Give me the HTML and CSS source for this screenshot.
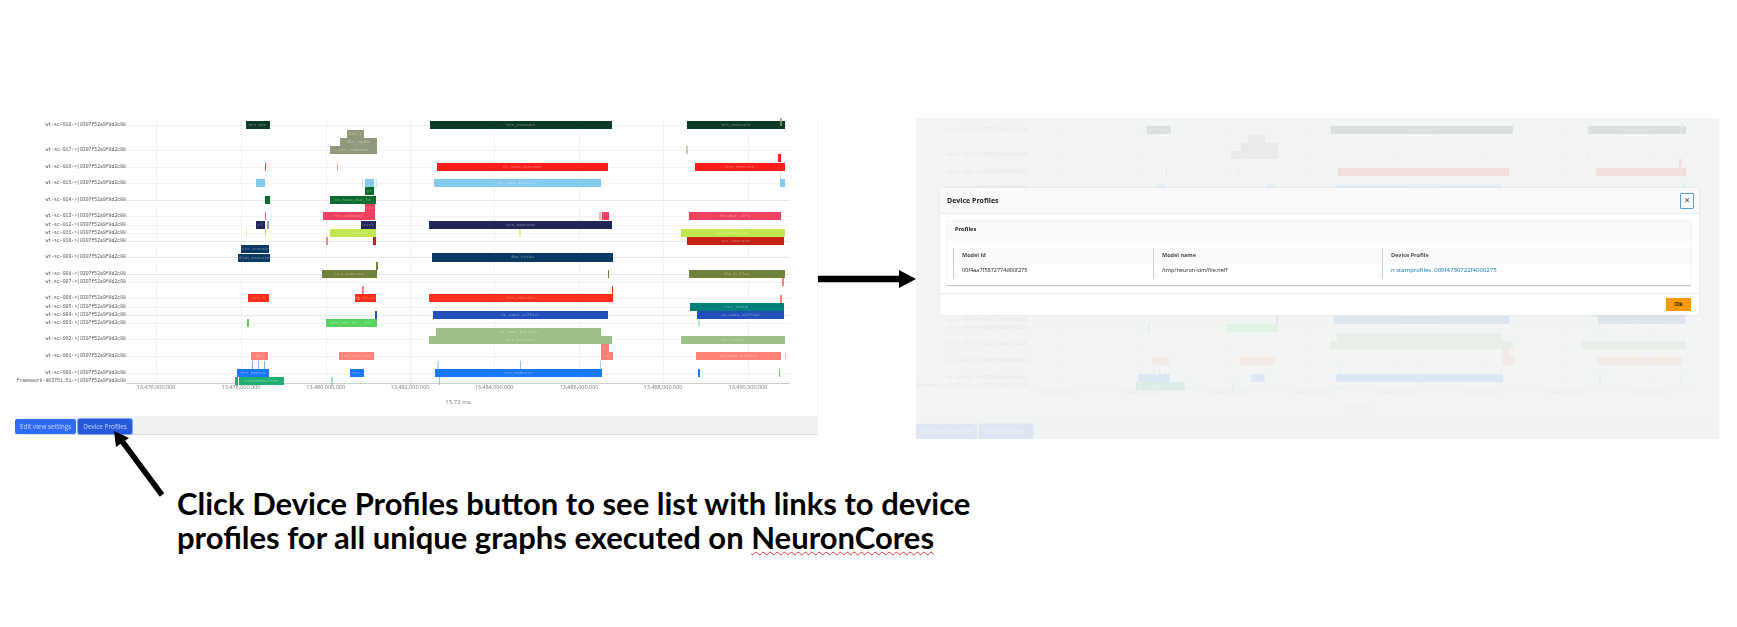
FILE: index.html
```html
<!DOCTYPE html>
<html lang="en">

<head>
    <meta charset="UTF-8">
    <title>Device Profiles</title>
    <link rel="stylesheet" href="styles.css">
</head>

<body>
    <div class="slide">
        <!-- Left: timeline -->
        <div class="timeline-panel" data-chart></div>

        <!-- Right: timeline behind the modal -->
        <div class="timeline-panel dimmed" data-chart>
            <div class="backdrop"></div>
            <div class="modal">
                <div class="modal-header">
                    <span class="modal-title">Device Profiles</span>
                    <span class="modal-close">×</span>
                </div>
                <div class="modal-body">
                    <div class="profiles-card">
                        <div class="profiles-title">Profiles</div>
                        <div class="profiles-table">
                            <div class="cell head">Model Id</div>
                            <div class="cell head">Model name</div>
                            <div class="cell head">Device Profile</div>
                            <div class="cell">00f4aa7f5872774d00f275</div>
                            <div class="cell">/tmp/neuron-sim/file.neff</div>
                            <div class="cell"><span class="link">n stamprofiles&nbsp; 009f4730722f4000275</span></div>
                        </div>
                    </div>
                </div>
                <div class="modal-footer">
                    <span class="btn-ok">Ok</span>
                </div>
            </div>
        </div>

        <!-- Arrows over the slide -->
        <svg class="arrows" width="1737" height="627" viewBox="0 0 1737 627">
            <path d="M818 279H900" stroke="#000" stroke-width="6.5" fill="none" />
            <path d="M916 279L899 270V288Z" fill="#000" />
            <path d="M162 495L122 441" stroke="#000" stroke-width="5.5" fill="none" />
            <path d="M114 431L129 438L116 447Z" fill="#000" />
        </svg>

        <p class="caption">Click Device Profiles button to see list with links to device<br>profiles for all unique graphs executed on <span class="squiggle">NeuronCores</span></p>
    </div>

    <script src="chart.js"></script>
</body>

</html>
```

FILE: styles.css
```css
body {
    margin: 0;
    background-color: #ffffff;
    font-family: "Open Sans", Arial, sans-serif;
}

.slide {
    position: relative;
    width: 1737px;
    height: 627px;
    overflow: hidden;
}

.arrows {
    position: absolute;
    top: 0;
    left: 0;
}

/* Timeline */

.timeline-panel {
    position: absolute;
    top: 113px;
    left: 15px;
    width: 803px;
    height: 321px;
    background-color: #ffffff;
}

.timeline-panel.dimmed {
    top: 118px;
    left: 916px;
    overflow: hidden;
}

.chart {
    position: absolute;
    top: 0;
    left: 0;
    width: 803px;
    height: 303px;
    filter: blur(0.5px);
}

.chart-edge {
    position: absolute;
    top: 5px;
    right: 0;
    width: 1px;
    height: 316px;
    background-color: #f0f0f0;
}

.grid-v {
    position: absolute;
    top: 5px;
    width: 1px;
    height: 265px;
    background-color: #f1f1f1;
}

.grid-h {
    position: absolute;
    left: 111px;
    width: 664px;
    height: 1px;
    background-color: #f2f2f2;
}

.grid-h.strong {
    background-color: #e8e8e8;
}

.axis-line {
    position: absolute;
    top: 270px;
    left: 111px;
    width: 664px;
    height: 1px;
    background-color: #cccccc;
}

.row-label {
    position: absolute;
    right: 692px;
    font-family: "Liberation Mono", monospace;
    font-size: 4.8px;
    line-height: 6px;
    color: #555555;
    white-space: nowrap;
}

.tick-label {
    position: absolute;
    top: 270px;
    width: 60px;
    margin-left: -30px;
    font-family: "Open Sans", sans-serif;
    font-size: 5.5px;
    line-height: 8px;
    text-align: center;
    color: #777777;
}

.axis-title {
    position: absolute;
    top: 284px;
    left: 413px;
    width: 60px;
    font-family: "Open Sans", sans-serif;
    font-size: 6px;
    line-height: 10px;
    text-align: center;
    color: #777777;
}

.bar {
    position: absolute;
    height: 8px;
    box-sizing: border-box;
    overflow: hidden;
    font-family: "Liberation Mono", monospace;
    font-size: 4.3px;
    line-height: 8px;
    text-align: center;
    white-space: nowrap;
    color: rgba(255, 255, 255, 0.42);
}

.toolbar {
    position: absolute;
    top: 303px;
    left: 0;
    display: flex;
    gap: 2px;
    width: 803px;
    height: 18px;
    border-bottom: 1px solid #e0e2e2;
    background-color: #f0f2f2;
}

.btn-primary {
    height: 15px;
    margin-top: 3px;
    padding: 0 5px;
    border-radius: 2px;
    background-color: #2f6bff;
    font-size: 6.4px;
    line-height: 15px;
    color: #c8d9ff;
    white-space: nowrap;
    filter: blur(0.3px);
}

.btn-primary.active {
    background-color: #2858dc;
    box-shadow: 0 0 0 1px #7ea4f5;
}

/* Right panel: page behind the modal */

.backdrop {
    position: absolute;
    top: 0;
    left: 0;
    right: 0;
    bottom: 0;
    z-index: 2;
    background-color: rgba(242, 244, 243, 0.9);
}

/* Modal */

.modal {
    position: absolute;
    top: 70px;
    left: 24px;
    z-index: 3;
    display: flex;
    flex-direction: column;
    width: 759px;
    height: 127px;
    background-color: #ffffff;
    box-shadow: 0 0 2px rgba(0, 0, 0, 0.1);
    font-family: "Open Sans", sans-serif;
    color: #16191f;
}

.modal-header {
    display: flex;
    justify-content: space-between;
    align-items: center;
    height: 25px;
    padding: 0 5px 0 7px;
    border-bottom: 1px solid #eaeded;
    background-color: #fafafa;
}

.modal-title {
    font-size: 7px;
    font-weight: bold;
    filter: blur(0.25px);
}

.modal-close {
    width: 12px;
    height: 14px;
    border: 1px solid #5a9fd4;
    border-radius: 1px;
    font-size: 10px;
    line-height: 13px;
    text-align: center;
    color: #545b64;
}

.modal-body {
    padding: 7px 8px 7px 7px;
    border-bottom: 1px solid #eaeded;
}

.profiles-card {
    height: 65px;
    box-sizing: border-box;
    border-bottom: 1px solid #b9c6c2;
    box-shadow: 0 0 1px rgba(0, 0, 0, 0.25);
}

.profiles-title {
    height: 20px;
    padding-left: 8px;
    background-color: #fafafa;
    font-size: 5.6px;
    font-weight: bold;
    line-height: 16px;
    filter: blur(0.25px);
}

.profiles-table {
    display: grid;
    grid-template-columns: 200px 229px 1fr;
    margin: 7px 0 0 6px;
}

.cell {
    height: 15px;
    padding-left: 8px;
    border-left: 1px solid #c8cbe2;
    font-size: 5.5px;
    line-height: 13px;
    filter: blur(0.2px);
}

.cell.head {
    height: 16px;
    background-color: #fafafa;
    font-weight: bold;
    line-height: 14px;
    color: #444b52;
}

.link {
    color: #0073bb;
    font-size: 6px;
}

.modal-footer {
    display: flex;
    justify-content: flex-end;
    padding: 4px 8px 0 0;
}

.btn-ok {
    width: 25px;
    height: 13px;
    background-color: #ff9900;
    font-size: 6px;
    font-weight: bold;
    line-height: 13px;
    text-align: center;
}

/* Caption */

.caption {
    position: absolute;
    top: 486px;
    left: 177px;
    margin: 0;
    font-family: Lato, sans-serif;
    font-size: 31px;
    font-weight: bold;
    line-height: 34px;
    color: #000000;
    white-space: nowrap;
}

.squiggle {
    text-decoration: underline wavy #e03030 1px;
    text-underline-offset: 2px;
}
```

FILE: chart.js
```js
// rows: [label, y centre on the slide, stronger line]
const rows = [
    ['wt-sc-018->(0307f52a9f8d2c08', 125, 0], ['wt-sc-017->(0307f52a9f8d2c08', 150, 0],
    ['wt-sc-016->(0307f52a9f8d2c08', 166.5, 0], ['wt-sc-015->(0307f52a9f8d2c08', 183, 0],
    ['wt-sc-014->(0307f52a9f8d2c08', 199.5, 1], ['wt-sc-013->(0307f52a9f8d2c08', 216, 0],
    ['wt-sc-012->(0307f52a9f8d2c08', 224.5, 0], ['wt-sc-011->(0307f52a9f8d2c08', 232.5, 0],
    ['wt-sc-010->(0307f52a9f8d2c08', 241, 1], ['wt-sc-009->(0307f52a9f8d2c08', 257, 1],
    ['wt-sc-008->(0307f52a9f8d2c08', 274, 1], ['wt-sc-007->(0307f52a9f8d2c08', 282, 0],
    ['wt-sc-006->(0307f52a9f8d2c08', 298, 0], ['wt-sc-005->(0307f52a9f8d2c08', 306.5, 0],
    ['wt-sc-004->(0307f52a9f8d2c08', 315, 1], ['wt-sc-003->(0307f52a9f8d2c08', 323, 0],
    ['wt-sc-002->(0307f52a9f8d2c08', 339, 0], ['wt-sc-001->(0307f52a9f8d2c08', 356, 0],
    ['wt-sc-000->(0307f52a9f8d2c08', 373, 0], ['framework-803751:51->(0307f52a9f8d2c08', 381, 0]
];

const ticks = [156, 241, 325.7, 410, 494, 579, 663, 748];
const tickText = ['476', '478', '480', '482', '484', '486', '488', '490'];

// bars: [colour, x1, x2, y top, text, opacity, height]
const bars = [
    ['#0c3c27', 245.5, 269.5, 121, 'nrt exe'], ['#0c3c27', 430, 611.7, 121, 'nrt_execute'], ['#0c3c27', 686.7, 785, 121, 'nrt_execute'],
    ['#8f9a7c', 780, 782, 118, '', 0.8],
    ['#8f9a7c', 347, 364, 129.5, 'ksc t'], ['#8f9a7c', 340, 377, 138, 'dlc_index'], ['#8f9a7c', 330, 377, 146, 'nrt_execute'], ['#8f9a7c', 686, 687.5, 146, '', 0.5],
    ['#ff1e19', 264.5, 266, 162.5, '', 0.9], ['#ff1e19', 336.5, 338, 162.5, '', 0.4], ['#ff1e19', 436.7, 608, 162.5, 'cc_sooc_buttoon'], ['#ff1e19', 695, 785, 162.5, 'nrt_execute'], ['#ff1e19', 778, 781, 154, ''],
    ['#84cbf0', 256, 264.5, 179, ''], ['#84cbf0', 365, 374, 179, ''], ['#84cbf0', 361.5, 362.5, 179, '', 0.5], ['#84cbf0', 376, 377, 179, '', 0.5], ['#84cbf0', 434, 601, 179, 'cc_sooc_buttoon'], ['#84cbf0', 780, 784.5, 179, ''], ['#84cbf0', 780, 781, 171, '', 0.5],
    ['#0c6b2e', 265, 269.5, 195.5, ''], ['#0c6b2e', 330, 376, 195.5, 'cc_sooc_buc_hk'], ['#0c6b2e', 365, 373.7, 187, 'cr'],
    ['#f0415f', 264.5, 266, 212, '', 0.9], ['#f0415f', 322.7, 375, 212, 'nrt_execute'], ['#f0415f', 365, 375, 204, 'ctr'], ['#f0415f', 601.7, 609, 212, ''], ['#f0415f', 599, 600.5, 212, '', 0.4], ['#f0415f', 689, 780.7, 212, 'evc_bar_chrs'],
    ['#20285a', 256, 265, 220.5, 'rl'], ['#20285a', 267, 268.5, 220.5, '', 0.45], ['#20285a', 361, 376.3, 220.5, 'ctrl'], ['#20285a', 429, 612, 220.5, 'nrt_execute'],
    ['#c0e84e', 245.5, 246.5, 228.5, '', 0.5], ['#c0e84e', 264.5, 266, 228.5, ''], ['#c0e84e', 330, 376, 228.5, 'nrt_execute'], ['#c0e84e', 519, 520.5, 228.5, '', 0.5], ['#c0e84e', 680.7, 785, 228.5, 'nrt_exec_ctx'],
    ['#c42314', 326, 327.5, 237, '', 0.5], ['#c42314', 372.5, 375.7, 237, ''], ['#c42314', 686.7, 784, 237, 'nrt_execute'],
    ['#0a3a63', 240.7, 269.3, 245, 'ctr_create'], ['#0a3a63', 238, 270, 253.5, 'dlab_execute'], ['#0a3a63', 432, 612.5, 253, 'dbo_skiba', 1, 9],
    ['#6f8239', 322, 377, 270, 'nrt_execute'], ['#6f8239', 376, 377.5, 262, ''], ['#6f8239', 607.5, 609, 270, ''], ['#6f8239', 688.7, 785, 270, 'dlc_h_flac'],
    ['#ff8278', 782, 783.5, 278, ''], ['#ff8278', 362, 363.5, 286, ''],
    ['#ff2f1a', 248.3, 269.3, 294, 'nrt_h'], ['#ff2f1a', 355, 376, 294, 'dg_nr_cn'], ['#ff2f1a', 429, 613, 294, 'nrt_execute'], ['#ff2f1a', 611.5, 613, 286, ''], ['#ff8278', 780, 782, 295, ''],
    ['#00807a', 690, 783.7, 302.5, 'ctr_value'],
    ['#2150b8', 375, 376.5, 311, ''], ['#2150b8', 433, 608, 311, 'so_sooo_suffixr'], ['#2150b8', 697, 784, 311, 'so_sooo_suffixr'],
    ['#55d460', 246.5, 249, 319, ''], ['#55d460', 326, 377, 319, 'wrt_hwr_ne _ dlr'], ['#55d460', 698, 699.5, 319, '', 0.4],
    ['#9cc088', 436, 601, 327.5, 'cc_sooc_buttoon'], ['#9cc088', 429, 611.7, 336, 'nrt_execute'], ['#9cc088', 681, 785, 336, 'dlc_index'],
    ['#ff8278', 251, 268, 352, 'nrt'], ['#ff8278', 338.7, 373.7, 352, 'ntx_sort_cnt'], ['#ff8278', 601, 612.7, 352, 'nc'], ['#ff8278', 601, 609, 344, 'r'], ['#ff8278', 696, 780.7, 352, 'so_sooo_suffixr'], ['#ff8278', 784.5, 786, 352, '', 0.5],
    ['#1a78ff', 237.3, 269.3, 369, 'nrt_execut'], ['#1a78ff', 349.7, 364, 369, 'nrt'], ['#1a78ff', 435, 601.7, 369, 'nrt_execute'], ['#1a78ff', 697.5, 700, 369, ''], ['#1a78ff', 778.7, 780.3, 369, '', 0.6],
    ['#1a78ff', 251.5, 253, 361, '', 0.6], ['#1a78ff', 257.5, 259, 361, '', 0.6], ['#1a78ff', 263.5, 265, 361, '', 0.6], ['#1a78ff', 437, 438.5, 361, '', 0.3], ['#1a78ff', 519.5, 521, 361, '', 0.5], ['#1a78ff', 599.5, 601, 361, '', 0.4],
    ['#1fae6f', 235.3, 238, 377, ''], ['#1fae6f', 239.3, 283.7, 377, 'ethzfmdsoltoo'], ['#1fae6f', 331, 332.5, 377, '', 0.4], ['#1fae6f', 438.5, 440, 377, '', 0.5]
];

// the panel sits 15px in, its chart 113px down on the slide
function el(cls, text, left, top, width) {
    const node = document.createElement('div');
    node.className = cls;
    if (text) node.textContent = text;
    if (left !== undefined) node.style.left = (left - 15) + 'px';
    if (top !== undefined) node.style.top = (top - 113) + 'px';
    if (width !== undefined) node.style.width = width + 'px';
    return node;
}

function buildChart(panel) {
    const chart = el('chart');
    // behind the modal nothing shows, so those rows and bars are left out
    const dimmed = panel.classList.contains('dimmed');
    const hidden = (y, h) => dimmed && y > 180 && y + h < 310;

    ticks.forEach((x, i) => {
        chart.appendChild(el('grid-v', '', x));
        chart.appendChild(el('tick-label', '13,' + tickText[i] + ',000,000', x));
    });
    rows.forEach(([name, y, strong]) => {
        const line = el(strong ? 'grid-h strong' : 'grid-h');
        line.style.top = (y - 113) + 'px';
        chart.appendChild(line);
        if (hidden(y - 3, 6)) return;
        const label = el('row-label', name);
        label.style.top = (y - 116) + 'px';
        chart.appendChild(label);
    });
    chart.appendChild(el('axis-line'));
    chart.appendChild(el('axis-title', '15.72 ms'));

    bars.forEach(([color, x1, x2, y, text, opacity, h]) => {
        if (hidden(y, h || 8)) return;
        const bar = el('bar', text, x1, y, x2 - x1);
        bar.style.backgroundColor = color;
        if (opacity) bar.style.opacity = opacity;
        if (h) bar.style.height = h + 'px';
        chart.appendChild(bar);
    });

    const toolbar = el('toolbar');
    toolbar.append(el('btn-primary', 'Edit view settings'), el('btn-primary active', 'Device Profiles'));

    panel.prepend(chart, toolbar, el('chart-edge'));
}

document.querySelectorAll('[data-chart]').forEach(buildChart);
```
